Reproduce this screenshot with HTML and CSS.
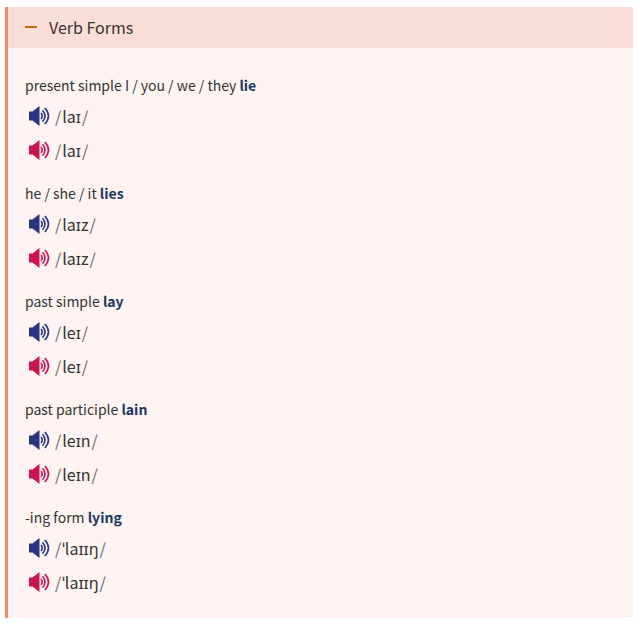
FILE: index.html
```html
<!DOCTYPE html>
<html lang="en">
<head>
    <meta charset="UTF-8">
    <meta name="viewport" content="width=device-width, initial-scale=1.0">
    <title>Verb Forms</title>
    <link rel="stylesheet" href="styles.css">
</head>
<body>
    <svg class="sprite" aria-hidden="true">
        <symbol id="speaker" viewBox="0 0 21 20">
            <path d="M0 5.500h3.500L10.500 0v20L3.500 14.500H0z" fill="currentColor"/>
            <path d="M12 7q2.400 3 0 6M13.500 4.300q5 5.700 0 11.400M15.800 2q7.400 8 0 16" fill="none" stroke="currentColor" stroke-width="1.600"/>
        </symbol>
    </svg>
    <section class="verb-forms">
        <button class="box-title" type="button" aria-expanded="true" onclick="toggleForms(this)">
            <span class="toggle"></span>Verb Forms
        </button>
        <div class="forms" id="forms">
            <div class="form">
                <p>present simple I / you / we / they <strong>lie</strong></p>
                <div class="phons"><button class="sound uk" type="button" aria-label="UK pronunciation"><svg><use href="#speaker"/></svg></button><span class="phon"><i>/</i>laɪ<i>/</i></span></div>
                <div class="phons"><button class="sound us" type="button" aria-label="US pronunciation"><svg><use href="#speaker"/></svg></button><span class="phon"><i>/</i>laɪ<i>/</i></span></div>
            </div>
            <div class="form">
                <p>he / she / it <strong>lies</strong></p>
                <div class="phons"><button class="sound uk" type="button" aria-label="UK pronunciation"><svg><use href="#speaker"/></svg></button><span class="phon"><i>/</i>laɪz<i>/</i></span></div>
                <div class="phons"><button class="sound us" type="button" aria-label="US pronunciation"><svg><use href="#speaker"/></svg></button><span class="phon"><i>/</i>laɪz<i>/</i></span></div>
            </div>
            <div class="form">
                <p>past simple <strong>lay</strong></p>
                <div class="phons"><button class="sound uk" type="button" aria-label="UK pronunciation"><svg><use href="#speaker"/></svg></button><span class="phon"><i>/</i>leɪ<i>/</i></span></div>
                <div class="phons"><button class="sound us" type="button" aria-label="US pronunciation"><svg><use href="#speaker"/></svg></button><span class="phon"><i>/</i>leɪ<i>/</i></span></div>
            </div>
            <div class="form">
                <p>past participle <strong>lain</strong></p>
                <div class="phons"><button class="sound uk" type="button" aria-label="UK pronunciation"><svg><use href="#speaker"/></svg></button><span class="phon"><i>/</i>leɪn<i>/</i></span></div>
                <div class="phons"><button class="sound us" type="button" aria-label="US pronunciation"><svg><use href="#speaker"/></svg></button><span class="phon"><i>/</i>leɪn<i>/</i></span></div>
            </div>
            <div class="form">
                <p>-ing form <strong>lying</strong></p>
                <div class="phons"><button class="sound uk" type="button" aria-label="UK pronunciation"><svg><use href="#speaker"/></svg></button><span class="phon"><i>/</i>ˈlaɪɪŋ<i>/</i></span></div>
                <div class="phons"><button class="sound us" type="button" aria-label="US pronunciation"><svg><use href="#speaker"/></svg></button><span class="phon"><i>/</i>ˈlaɪɪŋ<i>/</i></span></div>
            </div>
        </div>
    </section>
    <script>
        function toggleForms(button) {
            const forms = document.getElementById("forms");
            forms.hidden = !forms.hidden;
            button.setAttribute("aria-expanded", String(!forms.hidden));
        }
    </script>
</body>
</html>
```
FILE: styles.css
```css
* {
    box-sizing: border-box;
}
body {
    margin: 0;
    padding: 7px 7px 6px 5px;
    background: #fff;
    color: #333;
    font-family: "Noto Sans CJK SC", "Noto Sans", sans-serif;
    font-size: 14px;
}
.sprite {
    display: none;
}
.verb-forms {
    background: #fdf3f1;
    border-left: 3px solid #f28c70;
}
.box-title {
    display: flex;
    align-items: center;
    gap: 12px;
    width: 100%;
    padding: 8px 17px 9px;
    border: none;
    background: #fbded8;
    color: #333;
    font-family: inherit;
    font-size: 16px;
    line-height: 24px;
    text-align: left;
    cursor: pointer;
}
.toggle {
    width: 12px;
    height: 2px;
    background: #c76e00;
}
.forms {
    padding: 23px 17px 7px;
}
.form {
    padding-bottom: 12px;
}
.form p {
    margin: 0;
    line-height: 28px;
}
strong {
    color: #1a3561;
    font-weight: bold;
}
.phons {
    display: flex;
    align-items: center;
    gap: 4px;
    height: 34px;
    padding-left: 4px;
}
.sound {
    display: flex;
    padding: 0;
    border: none;
    background: none;
    cursor: pointer;
}
.sound svg {
    width: 21px;
    height: 20px;
}
.uk {
    color: #28347f;
}
.us {
    color: #cc1252;
}
.phon {
    font-size: 16px;
    line-height: 24px;
}
.phon i {
    margin: 0 1px;
    color: #666;
    font-style: normal;
}
```
